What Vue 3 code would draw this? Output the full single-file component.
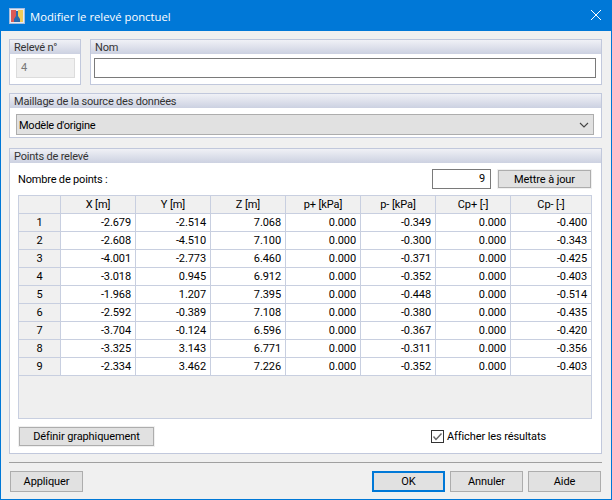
<script setup>
const columns = ['X [m]', 'Y [m]', 'Z [m]', 'p+ [kPa]', 'p- [kPa]', 'Cp+ [-]', 'Cp- [-]']
const rows = [
  ['-2.679', '-2.514', '7.068', '0.000', '-0.349', '0.000', '-0.400'],
  ['-2.608', '-4.510', '7.100', '0.000', '-0.300', '0.000', '-0.343'],
  ['-4.001', '-2.773', '6.460', '0.000', '-0.371', '0.000', '-0.425'],
  ['-3.018', '0.945', '6.912', '0.000', '-0.352', '0.000', '-0.403'],
  ['-1.968', '1.207', '7.395', '0.000', '-0.448', '0.000', '-0.514'],
  ['-2.592', '-0.389', '7.108', '0.000', '-0.380', '0.000', '-0.435'],
  ['-3.704', '-0.124', '6.596', '0.000', '-0.367', '0.000', '-0.420'],
  ['-3.325', '3.143', '6.771', '0.000', '-0.311', '0.000', '-0.356'],
  ['-2.334', '3.462', '7.226', '0.000', '-0.352', '0.000', '-0.403'],
]
</script>

<template>
  <div class="window">
    <header class="titlebar">
      <svg class="app-icon" width="16" height="16" viewBox="0 0 16 16">
        <rect x="0.5" y="0.5" width="15" height="15" fill="#e4eaf5" stroke="#a9bedd" />
        <rect x="2" y="2" width="5" height="12" fill="#dc5a55" />
        <rect x="9" y="2" width="5" height="12" fill="#f2cc58" />
        <path d="M7 3h2v5l2 3v3H5v-3l2-3z" fill="#2a69ad" />
      </svg>
      <span class="title">Modifier le relevé ponctuel</span>
      <svg class="close" width="10" height="10" viewBox="0 0 10 10">
        <path d="M0 0L10 10M10 0L0 10" stroke="#fff" stroke-width="1" fill="none" />
      </svg>
    </header>

    <main class="content">
      <div class="top-row">
        <section class="group group-number">
          <h3 class="group-title">Relevé n°</h3>
          <div class="group-body number-body">
            <div class="readonly">4</div>
          </div>
        </section>
        <section class="group group-name">
          <h3 class="group-title">Nom</h3>
          <div class="group-body name-body">
            <div class="textbox"></div>
          </div>
        </section>
      </div>

      <section class="group group-mesh">
        <h3 class="group-title">Maillage de la source des données</h3>
        <div class="group-body mesh-body">
          <div class="combo">
            <span class="combo-text">Modèle d'origine</span>
            <svg width="10" height="6" viewBox="0 0 10 6">
              <path d="M1 1L5 5L9 1" stroke="#444" stroke-width="1.1" fill="none" />
            </svg>
          </div>
        </div>
      </section>

      <section class="group group-points">
        <h3 class="group-title">Points de relevé</h3>
        <div class="group-body points-body">
          <div class="count-row">
            <span class="count-label">Nombre de points :</span>
            <div class="count-input">9</div>
            <div class="btn update">Mettre à jour</div>
          </div>
          <div class="grid">
            <div class="grid-row grid-head">
              <div class="cell index"></div>
              <div v-for="c in columns" :key="c" class="cell head">{{ c }}</div>
            </div>
            <div v-for="(r, i) in rows" :key="i" class="grid-row">
              <div class="cell index">{{ i + 1 }}</div>
              <div v-for="(v, j) in r" :key="j" class="cell value">{{ v }}</div>
            </div>
          </div>
          <div class="points-footer">
            <div class="btn define">Définir graphiquement</div>
            <label class="check">
              <svg width="13" height="13" viewBox="0 0 13 13">
                <rect x="0.5" y="0.5" width="12" height="12" fill="#fff" stroke="#333" />
                <path d="M2.5 6.5L5 9.5L10.5 3.5" stroke="#666" stroke-width="1.4" fill="none" />
              </svg>
              <span>Afficher les résultats</span>
            </label>
          </div>
        </div>
      </section>

      <footer class="actions">
        <div class="btn action apply">Appliquer</div>
        <div class="btn action ok">OK</div>
        <div class="btn action">Annuler</div>
        <div class="btn action">Aide</div>
      </footer>
    </main>
  </div>
</template>

<style scoped>
.window {
  width: 612px;
  height: 500px;
  box-sizing: border-box;
  border: 1px solid #0078d7;
  background: #f0f0f0;
  display: flex;
  flex-direction: column;
  font-family: Roboto, "Liberation Sans", sans-serif;
  font-size: 11px;
  letter-spacing: -0.1px;
  color: #000;
  overflow: hidden;
}
.titlebar {
  height: 30px;
  flex: none;
  background: #0078d7;
  display: flex;
  align-items: center;
  padding: 0 10px 0 8px;
  color: #fff;
}
.app-icon {
  margin-bottom: 1px;
}
.title {
  margin-left: 5px;
  font-family: "Open Sans", sans-serif;
  font-size: 11.3px;
  letter-spacing: 0;
  flex: 1;
}
.close {
  margin-bottom: 2px;
}
.content {
  flex: 1;
  padding: 8px 9px 7px 8px;
  display: flex;
  flex-direction: column;
}
.top-row {
  display: flex;
  gap: 9px;
  height: 46px;
}
.group {
  box-sizing: border-box;
  border: 1px solid #c1c8dc;
  background: #fff;
  display: flex;
  flex-direction: column;
}
.group-title {
  margin: 0;
  height: 14px;
  flex: none;
  padding-left: 4px;
  font-weight: normal;
  font-size: 11px;
  letter-spacing: -0.2px;
  line-height: 15px;
  color: #333;
  background: linear-gradient(#f0f1f6, #ccd1e1);
}
.group-body {
  flex: 1;
}
.group-number {
  width: 72px;
  flex: none;
}
.group-name {
  flex: 1;
}
.number-body {
  padding: 4px 5px 4px 6px;
}
.readonly {
  height: 20px;
  box-sizing: border-box;
  border: 1px solid #dcdcdc;
  background: #efefef;
  color: #777;
  padding-left: 4px;
  line-height: 18px;
}
.name-body {
  padding: 4px 5px 4px 3px;
}
.textbox {
  height: 20px;
  box-sizing: border-box;
  border: 1px solid #7a7a7a;
  background: #fff;
}
.group-mesh {
  margin-top: 8px;
  height: 45px;
}
.mesh-body {
  padding: 6px 7px 2px 6px;
}
.combo {
  height: 21px;
  box-sizing: border-box;
  border: 1px solid #adadad;
  background: #e1e1e1;
  display: flex;
  align-items: center;
  justify-content: space-between;
  padding: 0 4px 0 2px;
}
.combo-text {
  letter-spacing: -0.25px;
  line-height: 19px;
  padding-top: 1px;
}
.group-points {
  margin-top: 10px;
  height: 306px;
}
.points-body {
  padding: 6px 9px 0 8px;
  display: flex;
  flex-direction: column;
}
.count-row {
  height: 20px;
  display: flex;
  align-items: center;
  flex: none;
}
.count-label {
  flex: 1;
  letter-spacing: -0.18px;
  padding-top: 1px;
}
.count-input {
  width: 59px;
  height: 20px;
  box-sizing: border-box;
  border: 1px solid #7a7a7a;
  background: #fff;
  text-align: right;
  padding-right: 5px;
  line-height: 18px;
}
.btn {
  box-sizing: border-box;
  border: 1px solid #adadad;
  background: #e1e1e1;
  text-align: center;
  color: #000;
}
.update,
.define {
  box-shadow: 0 0 0 1px #f0f0f0;
}
.update {
  width: 93px;
  height: 18px;
  margin: 0 1px 0 7px;
  line-height: 17px;
}
.grid {
  height: 224px;
  flex: none;
  box-sizing: border-box;
  margin-top: 6px;
  border: 1px solid #c8cfe0;
  background: #efefef;
}
.grid-row {
  display: grid;
  grid-template-columns: 42px repeat(6, 75px) 1fr;
  height: 18px;
  background: #fff;
}
.cell {
  box-sizing: border-box;
  border-right: 1px solid #c8cfe0;
  border-bottom: 1px solid #c8cfe0;
  line-height: 17px;
  overflow: hidden;
  white-space: nowrap;
}
.cell:last-child {
  border-right: 0;
}
.index,
.head {
  background: #f0f0f0;
  text-align: center;
}
.value {
  text-align: right;
  padding-right: 4px;
}
.points-footer {
  display: flex;
  align-items: center;
  justify-content: space-between;
  margin-top: 8px;
  height: 19px;
}
.define {
  width: 135px;
  height: 19px;
  line-height: 17px;
  margin-left: 1px;
}
.check {
  display: flex;
  align-items: center;
  gap: 3px;
  margin-right: 46px;
}
.actions {
  margin-top: 8px;
  border-top: 1px solid #a0a0a0;
  padding: 8px 1px 0 1px;
  display: flex;
  gap: 5px;
}
.action {
  width: 73px;
  height: 21px;
  line-height: 19px;
}
.apply {
  margin-right: auto;
}
.ok {
  border: 2px solid #0078d7;
  line-height: 17px;
}
</style>

<style>
html, body { margin: 0; padding: 0; }
</style>
